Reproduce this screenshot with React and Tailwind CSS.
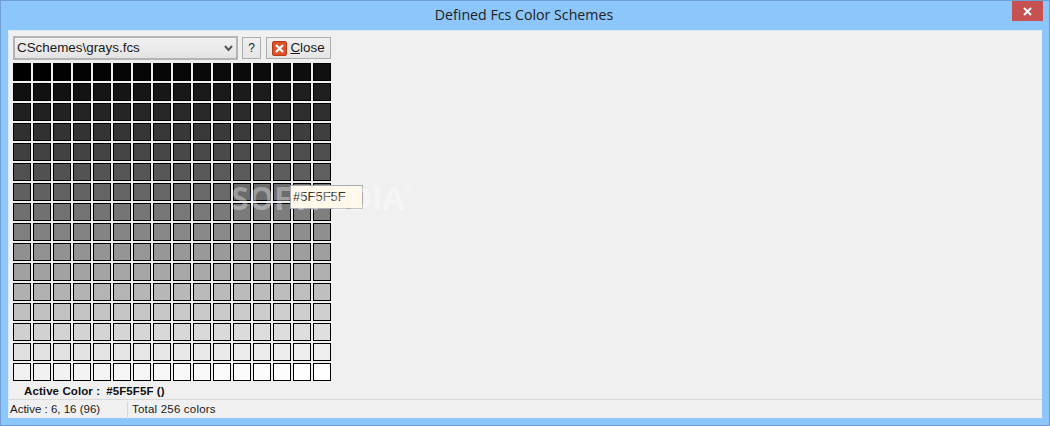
const rows = Array.from({ length: 16 }, (_, r) => r);
const cols = Array.from({ length: 16 }, (_, c) => c);

const gray = (r, c) => {
  const v = (r * 16 + c).toString(16).padStart(2, "0");
  return `#${v}${v}${v}`;
};

export default function App() {
  return (
    <div className="relative w-[1050px] h-[426px] flex flex-col bg-[#8cc6fb] border border-[#6f9fd2] overflow-hidden font-['Liberation_Sans',sans-serif] text-[#1a1a1a]">
      {/* title bar */}
      <div className="relative h-[29px] shrink-0 flex items-center justify-center text-[14.2px] pr-[2px] pb-[2px] font-['Open_Sans',sans-serif] text-[#222]">
        Defined Fcs Color Schemes
        <div className="absolute top-0 right-[6px] w-[31px] h-[20px] bg-[#c75050] flex items-center justify-center">
          <svg width="9" height="9" viewBox="0 0 9 9">
            <path d="M1 1 L8 8 M8 1 L1 8" stroke="#fff" strokeWidth="2" fill="none" />
          </svg>
        </div>
      </div>

      {/* client area */}
      <div className="flex-1 mx-[7px] mb-[7px] flex flex-col bg-[#f0f0f0] border-t border-l border-[#dcebf8] min-h-0">
        <div className="flex-1 flex flex-col pl-[4px] pt-[5px]">
          <div className="flex items-center h-[24px]">
            <div className="w-[225px] h-[24px] flex items-center justify-between border-2 border-[#b4b4b4] bg-gradient-to-b from-[#f0f0f0] to-[#e4e4e4] pl-[2px] pr-[3px] text-[13.4px]">
              <span>CSchemes\grays.fcs</span>
              <svg width="9" height="7" viewBox="0 0 9 7">
                <path d="M1 1 L4.5 5 L8 1" stroke="#555" strokeWidth="2" fill="none" />
              </svg>
            </div>
            <div className="ml-[4px] w-[19px] h-[22px] flex items-center justify-center border border-[#adadad] bg-gradient-to-b from-[#f0f0f0] to-[#e5e5e5] text-[12px]">
              ?
            </div>
            <div className="ml-[5px] w-[65px] h-[22px] flex items-center justify-center gap-[3px] border border-[#adadad] bg-gradient-to-b from-[#f0f0f0] to-[#e5e5e5] text-[13.4px]">
              <svg width="15" height="15" viewBox="0 0 15 15">
                <rect x="0.5" y="0.5" width="14" height="14" rx="1.5" fill="#e0512a" stroke="#b93a1a" />
                <path d="M4 4 L11 11 M11 4 L4 11" stroke="#fff" strokeWidth="2.4" fill="none" />
              </svg>
              <span>
                <span className="underline">C</span>lose
              </span>
            </div>
          </div>

          <div className="mt-[3px] flex flex-col gap-[2px]">
            {rows.map((r) => (
              <div key={r} className="flex gap-[2px]">
                {cols.map((c) => (
                  <div
                    key={c}
                    className="w-[18px] h-[18px] border border-black"
                    style={{ backgroundColor: gray(r, c) }}
                  />
                ))}
              </div>
            ))}
          </div>

          <div className="ml-[11px] mt-[3px] flex gap-[6px] text-[11.5px] leading-[14px] font-bold tracking-[0.1px] text-[#111]">
            <span>Active Color :</span>
            <span>#5F5F5F ()</span>
          </div>
        </div>

        {/* status bar */}
        <div className="h-[19px] shrink-0 flex items-center border-t border-[#d8d8d8] text-[11.5px] pt-[2px]">
          <div className="w-[119px] h-[17px] pl-[1px] flex items-center border-r border-[#d8d8d8]">Active : 6, 16 (96)</div>
          <div className="pl-[4px] tracking-[0.2px]">Total 256 colors</div>
        </div>
      </div>

      {/* tooltip */}
      <div className="absolute left-[289px] top-[184px] w-[73px] h-[24px] flex items-center pl-[2px] border border-[#a9a9b4] bg-[#fff7e8] text-[13px] text-[#333]">
        #5F5F5F
      </div>

      {/* watermark */}
      <div className="absolute left-[230px] top-[174px] flex items-start text-[32px] leading-[46px] font-bold text-white/35 font-['Open_Sans',sans-serif] pointer-events-none">
        SOFTPEDIA
        <span className="text-[9px] leading-[22px]">®</span>
      </div>
    </div>
  );
}
